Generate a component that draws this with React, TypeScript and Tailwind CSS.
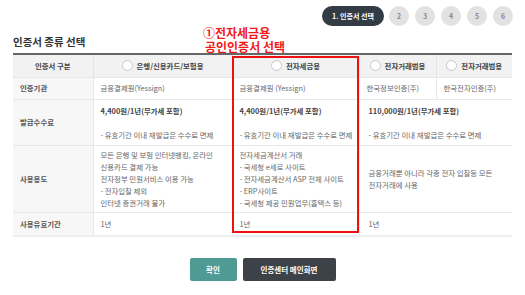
const Radio = () => (
  <span className="inline-block w-[11px] h-[11px] rounded-full bg-white border border-[#c8c8c8] shrink-0" />
);

const HeadCell = ({ label }: { label: string }) => (
  <th className="border-l border-[#e4e4e4] font-bold text-[#444]">
    <div className="flex items-center justify-center gap-[4px]">
      <Radio />
      <span>{label}</span>
    </div>
  </th>
);

const App = () => {
  const labelCls = "bg-[#f7f7f7] text-left pl-[7px] font-semibold text-[#555]";
  const cellCls = "border-l border-[#e8e8e8] pl-[7px] pr-[4px] text-left text-[#666]";

  return (
    <div
      className="relative w-[525px] h-[295px] bg-white overflow-hidden"
      style={{ fontFamily: '"Noto Sans CJK KR", "Noto Sans", sans-serif' }}
    >
      {/* step indicator */}
      <div className="flex justify-end items-center gap-[6px] pt-[6px] pr-[12px]">
        <div className="h-[20px] w-[62px] mr-[-1px] rounded-full bg-[#333b45] text-white text-[7px] font-bold flex items-center justify-center">
          1. 인증서 선택
        </div>
        {[2, 3, 4, 5, 6].map((n) => (
          <div
            key={n}
            className="w-[20px] h-[20px] rounded-full bg-[#e2e2e2] text-[#8a8a8a] text-[7px] font-bold flex items-center justify-center"
          >
            {n}
          </div>
        ))}
      </div>

      <h2 className="mt-[9px] ml-[13px] text-[10.5px] leading-[14px] font-bold text-[#333]">인증서 종류 선택</h2>

      {/* annotation */}
      <div className="absolute left-[203px] top-[26px] text-[12px] leading-[14px] font-bold text-[#f01818]">
        <div>①전자세금용</div>
        <div className="ml-[2px]">공인인증서 선택</div>
      </div>

      <div className="relative mx-[13px] mt-[4px] border-t-2 border-[#666] border-b-2 border-b-[#eeeeee]">
        <table className="w-[499px] table-fixed border-collapse text-[7.4px] leading-[12px]">
          <colgroup>
            <col className="w-[80px]" />
            <col className="w-[139px]" />
            <col className="w-[127px]" />
            <col className="w-[77px]" />
            <col className="w-[76px]" />
          </colgroup>
          <thead>
            <tr className="h-[22px] bg-[#f2f2f2]">
              <th className="font-bold text-[#444]">인증서 구분</th>
              <HeadCell label="은행/신용카드/보험용" />
              <HeadCell label="전자세금용" />
              <HeadCell label="전자거래범용" />
              <HeadCell label="전자거래범용" />
            </tr>
          </thead>
          <tbody>
            <tr className="h-[22px] border-t border-[#e8e8e8]">
              <td className={labelCls}>인증기관</td>
              <td className={cellCls}>금융결제원(Yessign)</td>
              <td className={cellCls}>금융결제원 (Yessign)</td>
              <td className={cellCls}>한국정보인증(주)</td>
              <td className={cellCls}>한국전자인증(주)</td>
            </tr>
            <tr className="h-[46px] border-t border-[#e8e8e8]">
              <td className={labelCls}>발급수수료</td>
              <td className={`${cellCls} align-top pt-[5px]`}>
                <div className="font-bold text-[#444]">4,400원/1년(부가세 포함)</div>
                <div className="h-[12px]" />
                <div>- 유효기간 이내 재발급은 수수료 면제</div>
              </td>
              <td className={`${cellCls} align-top pt-[5px]`}>
                <div className="font-bold text-[#444]">4,400원/1년(부가세 포함)</div>
                <div className="h-[12px]" />
                <div>- 유효기간 이내 재발급은 수수료 면제</div>
              </td>
              <td colSpan={2} className={`${cellCls} pl-[9px] align-top pt-[5px]`}>
                <div className="font-bold text-[#444]">110,000원/1년(부가세 포함)</div>
                <div className="h-[12px]" />
                <div>- 유효기간 이내 재발급은 수수료 면제</div>
              </td>
            </tr>
            <tr className="h-[67px] border-t border-[#e8e8e8]">
              <td className={labelCls}>사용용도</td>
              <td className={cellCls}>
                <div>모든 은행 및 보험 인터넷뱅킹, 온라인</div>
                <div>신용카드 결제 가능</div>
                <div>전자정부 민원서비스 이용 가능</div>
                <div>- 전자입찰 제외</div>
                <div>인터넷 증권거래 불가</div>
              </td>
              <td className={cellCls}>
                <div>전자세금계산서 거래</div>
                <div>- 국세청 e세로 사이트</div>
                <div>- 전자세금계산서 ASP 전체 사이트</div>
                <div>- ERP사이트</div>
                <div>- 국세청 제공 민원업무(홈택스 등)</div>
              </td>
              <td colSpan={2} className={`${cellCls} pl-[9px]`}>
                <div>금융거래뿐 아니라 각종 전자 입찰등 모든</div>
                <div>전자거래에 사용</div>
              </td>
            </tr>
            <tr className="h-[23px] border-t border-[#e8e8e8]">
              <td className={labelCls}>사용유효기간</td>
              <td className={cellCls}>1년</td>
              <td className={cellCls}>1년</td>
              <td colSpan={2} className={`${cellCls} pl-[9px]`}>1년</td>
            </tr>
          </tbody>
        </table>
        {/* highlight box */}
        <div className="absolute left-[219px] top-[1px] w-[127px] h-[177px] border-2 border-[#ee1111] pointer-events-none" />
      </div>

      <div className="flex justify-center gap-[6px] mt-[21px]">
        <button className="w-[47px] h-[23px] rounded-[2px] bg-[#4f9a93] text-white text-[7.5px] font-semibold">확인</button>
        <button className="w-[93px] h-[23px] rounded-[2px] bg-[#3d4249] text-white text-[7.5px] font-semibold">인증센터 메인화면</button>
      </div>
    </div>
  );
};

export default App;
